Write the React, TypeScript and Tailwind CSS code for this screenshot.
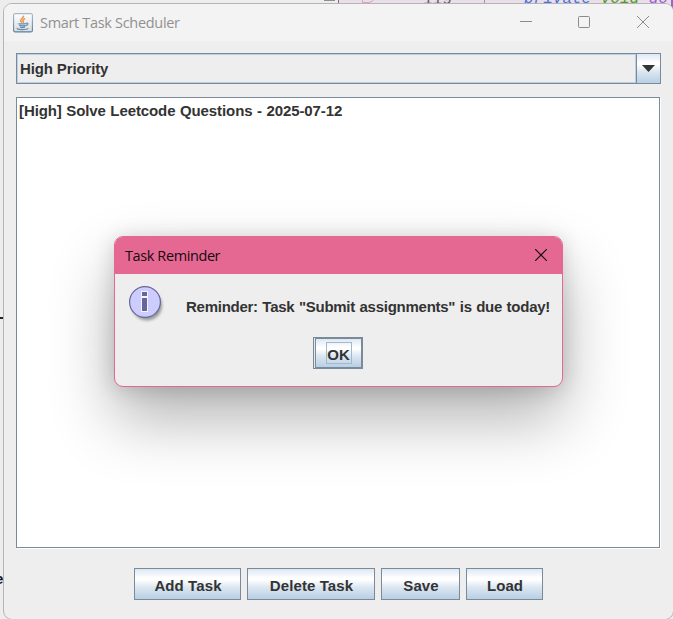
import React from "react";

const metalFill =
  "bg-[linear-gradient(to_bottom,#dde8f3_0%,#ffffff_30%,#ffffff_36%,#dce7f1_60%,#b8cfe5_100%)]";

function JavaIcon() {
  return (
    <svg className="shrink-0" width="20" height="20" viewBox="0 0 20 20" fill="none">
      <defs>
        <linearGradient id="jb" x1="0" y1="0" x2="0" y2="1">
          <stop offset="0" stopColor="#fff" />
          <stop offset="1" stopColor="#d5dde3" />
        </linearGradient>
        <linearGradient id="je" x1="0" y1="0" x2="0" y2="1">
          <stop offset="0" stopColor="#aab8c3" />
          <stop offset="1" stopColor="#5f7d93" />
        </linearGradient>
      </defs>
      <rect x=".6" y=".6" width="18.8" height="18.3" rx="1.5" fill="url(#jb)" stroke="url(#je)" strokeWidth="1.1" />
      <path d="M10.4 2.7c1.2 2-3.4 3-2.8 5 .2.7 1 1.2 1.7 1.7M12.1 5.6c-1.6.7-2.6 1.5-1.9 2.4.5.7.5 1-.2 1.7" stroke="#ee9a52" strokeWidth="1.6" />
      <path d="M5.4 10.4c-.8.7 7.3.7 8 0M6.2 12.3c1 .9 5.3.8 6.5.1M7 14c1 .7 4 .7 5 0M13.5 10.2c2-.4 1.8 1.7-.4 2.3M4.5 15.1c-2 1.8 9 2 10.8.3" stroke="#6a8ca8" strokeWidth="1.3" />
    </svg>
  );
}

function InfoIcon() {
  return (
    <svg className="shrink-0" width="40" height="40" viewBox="0 0 40 40">
      <defs>
        <filter id="sh" x="-30%" y="-30%" width="170%" height="170%">
          <feGaussianBlur stdDeviation="1.6" />
        </filter>
      </defs>
      <circle cx="19" cy="19.5" r="15" fill="#000" opacity=".36" filter="url(#sh)" />
      <circle cx="17" cy="16" r="15.4" fill="#ccccff" stroke="#666699" strokeWidth="1.2" />
      <path d="M13 5h7v21h-7z" fill="#f4f4ff" />
      <path d="M14 6h5v4h-5zM14 12h5v13h-5z" fill="#666699" />
    </svg>
  );
}

function MetalButton({ className, children }: { className: string; children: React.ReactNode }) {
  return (
    <button
      className={`border border-[#7a8a99] ${metalFill} ${className} flex h-8 items-center justify-center pt-[3px] pl-px leading-none`}
    >
      {children}
    </button>
  );
}

function CodeBackdrop() {
  return (
    <div className="absolute inset-0 overflow-hidden bg-[#ededed]">
      <div className="absolute top-0 right-0 h-8 w-[335px] border-l border-[#9c5e72] bg-[#eadfe9] font-['Liberation_Mono'] text-[16px] leading-none font-normal tracking-normal">
        <span className="absolute -top-[8px] left-[84px] text-[#5f5866]">119</span>
        <i className="absolute top-0 left-[145px] h-4 w-px bg-[#9d96a0]" />
        <i className="absolute -top-[8px] left-[23px] h-[11px] w-[14px] rounded-br-lg border border-[#dda0c4]" />
        <span className="absolute -top-[9px] left-[185px] whitespace-pre italic">
          <span className="text-[#4a73dc]">private </span>
          <span className="text-[#559c25]">void </span>
          <span className="text-[#a05fd8]">do</span>
        </span>
        <i className="absolute top-0 right-0 h-8 w-[2px] bg-[#9467c8]" />
      </div>
      <i className="absolute top-0 left-[324px] h-px w-[11px] bg-[#8d8d8d]" />
      <i className="absolute top-[317px] left-0 h-[2px] w-[4px] bg-[#222]" />
      <b className="absolute top-[571px] -left-[5px] text-[15px] leading-none text-[#101828]">e</b>
    </div>
  );
}

function Dialog() {
  return (
    <div className="absolute top-[236px] left-[114px] flex h-[151px] w-[449px] flex-col overflow-hidden rounded-[9px] border border-[#e46892] bg-[#eeeeee] shadow-[0_32px_64px_rgba(0,0,0,0.3),0_2px_21px_rgba(0,0,0,0.16)]">
      <div className="flex h-[37px] shrink-0 items-center justify-between bg-[#e46892] pr-[15px] pl-[10px] font-['Open_Sans'] text-[14.5px] font-normal text-[#17080e]">
        <span className="tracking-[-0.4px]">Task Reminder</span>
        <svg className="mb-px" width="12" height="12" viewBox="0 0 12 12" stroke="#111" strokeWidth="1.2">
          <path d="M0 0l12 12M12 0L0 12" />
        </svg>
      </div>
      <div className="flex h-[63px] shrink-0 pt-[12px] pl-[13px]">
        <InfoIcon />
        <span className="mt-[12px] ml-[18px] whitespace-nowrap leading-[18px] tracking-[-0.26px] [word-spacing:0.6px]">
          Reminder: Task "Submit assignments" is due today!
        </span>
      </div>
      <button className="ml-[198px] flex h-8 w-[50px] border border-[#7a8a99] bg-[#e3eaf1] pl-px">
        <span
          className={`flex h-[30px] flex-1 items-center justify-center border border-[#7a8a99] ${metalFill}`}
        >
          <span className="flex h-[22px] w-[26px] items-center justify-center border border-[#a3b8cc] pt-[3px] leading-none tracking-normal">
            OK
          </span>
        </span>
      </button>
    </div>
  );
}

export default function App() {
  return (
    <div className="relative h-[619px] w-[673px] overflow-hidden font-['Liberation_Sans'] text-[15px] font-bold tracking-[0.1px] text-[#333333]">
      <CodeBackdrop />
      <main className="relative mt-[3px] ml-[3px] flex h-[617px] w-[671px] flex-col overflow-hidden rounded-[9px] border border-[#b5b5b5] bg-[#eeeeee]">
        <header className="flex h-[37px] shrink-0 items-center bg-[#f3f3f3] pl-[9px]">
          <JavaIcon />
          <span className="ml-[7px] font-['Open_Sans'] text-[14.5px] font-normal tracking-[-0.32px] text-[#919191]">
            Smart Task Scheduler
          </span>
          <svg
            className="mr-[23px] mb-px ml-auto"
            width="130"
            height="14"
            viewBox="0 0 130 14"
            fill="none"
            stroke="#8b8b8b"
          >
            <path d="M0 6.5h12M117 1l12 12M129 1l-12 12" />
            <rect x="58.5" y="1.5" width="11" height="11" rx="1" />
          </svg>
        </header>
        <div className="flex flex-1 flex-col pt-[12px] pl-[12px]">
          <div className="flex h-[31px] w-[645px] shrink-0 border border-[#7a8a99]">
            <div className="flex flex-1 items-center border border-[#b8cfe5] pt-[2px] pl-[2px] tracking-[-0.13px]">
              High Priority
            </div>
            <div className={`flex w-[24px] items-center justify-center border-l border-[#7a8a99] ${metalFill}`}>
              <svg width="13" height="7" viewBox="0 0 13 7">
                <path d="M0 0h13L6.5 7z" fill="#333" />
              </svg>
            </div>
          </div>
          <div className="mt-[13px] h-[451px] w-[644px] shrink-0 border border-[#7a8a99] bg-white pt-[4px] pl-[2px] leading-[18px] tracking-[-0.1px] [word-spacing:0.5px] shadow-[1px_1px_0_white]">
            [High] Solve Leetcode Questions - 2025-07-12
          </div>
          <footer className="mt-[20px] flex gap-[6px] pl-[118px]">
            <MetalButton className="w-[107px]">Add Task</MetalButton>
            <MetalButton className="w-[128px]">Delete Task</MetalButton>
            <MetalButton className="w-[79px]">Save</MetalButton>
            <MetalButton className="w-[77px]">Load</MetalButton>
          </footer>
        </div>
      </main>
      <Dialog />
    </div>
  );
}
